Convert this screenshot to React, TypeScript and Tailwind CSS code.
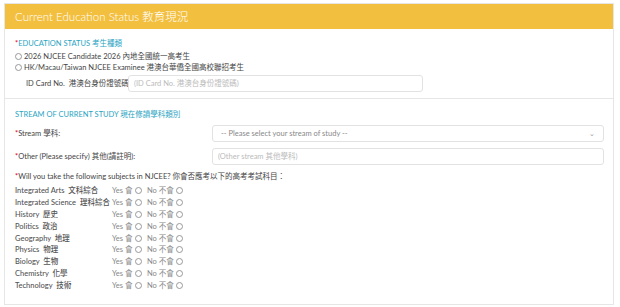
import React from "react";

const subjects = [
  ["Integrated Arts", "文科綜合"],
  ["Integrated Science", "理科綜合"],
  ["History", "歷史"],
  ["Politics", "政治"],
  ["Geography", "地理"],
  ["Physics", "物理"],
  ["Biology", "生物"],
  ["Chemistry", "化學"],
  ["Technology", "技術"],
];

function Radio() {
  return <span className="inline-block h-[7px] w-[7px] shrink-0 rounded-full border border-[#999] bg-white" />;
}

export default function App() {
  return (
    <div
      className="h-[307px] w-[620px] bg-white pl-[4px] pt-[3px]"
      style={{ fontFamily: 'Lato, "Noto Sans CJK TC", sans-serif' }}
    >
      <div className="w-[610px] border border-[#e6e6e6]">
        <div className="flex h-[25px] items-center bg-[#f3bf3f] pl-[10px] text-[11.5px] font-light text-white">
          Current Education Status 教育現況
        </div>

        <section className="h-[70px] border-b border-[#e6e6e6] pl-[10px] pt-[9px] text-[7.5px] leading-[11px] text-[#444]">
          <p className="text-[#2aa4c2]">
            <span className="text-red-600">*</span>EDUCATION STATUS 考生種類
          </p>
          <label className="mt-[2px] flex items-center gap-[2px]">
            <Radio /> 2026 NJCEE Candidate 2026 內地全國統一高考生
          </label>
          <label className="flex items-center gap-[2px]">
            <Radio /> HK/Macau/Taiwan NJCEE Examinee 港澳台華僑全國高校聯招考生
          </label>
          <div className="mt-[2px] flex items-center">
            <span className="w-[113px] whitespace-nowrap pl-[11px]">ID Card No.&nbsp;&nbsp;港澳台身份證號碼</span>
            <div className="flex h-[17px] w-[295px] items-center rounded-[3px] border border-[#e2e2e2] px-[5px] text-[#bbb]">
              (ID Card No. 港澳台身份證號碼)
            </div>
          </div>
        </section>

        <section className="h-[205px] pl-[10px] pt-[10px] text-[7.5px] leading-[11px] text-[#444]">
          <p className="text-[#2aa4c2]">STREAM OF CURRENT STUDY 現在修讀學科類別</p>
          <div className="mt-[5px] flex items-center">
            <span className="w-[197px]">
              <span className="text-red-600">*</span>Stream 學科:
            </span>
            <div className="flex h-[17px] w-[392px] items-center justify-between rounded-[3px] border border-[#e2e2e2] px-[8px] text-[#888]">
              <span>-- Please select your stream of study --</span>
              <span className="text-[7px] text-[#999]">⌄</span>
            </div>
          </div>
          <div className="mt-[6px] flex items-center">
            <span className="w-[197px]">
              <span className="text-red-600">*</span>Other (Please specify) 其他(請註明):
            </span>
            <div className="flex h-[17px] w-[392px] items-center rounded-[3px] border border-[#e2e2e2] px-[5px] text-[#bbb]">
              (Other stream 其他學科)
            </div>
          </div>
          <p className="mt-[6px]">
            <span className="text-red-600">*</span>Will you take the following subjects in NJCEE? 你會否應考以下的高考考試科目：
          </p>
          <div className="mt-[3px]">
            {subjects.map(([en, zh]) => (
              <div key={en} className="flex h-[11.8px] items-center">
                <span className="w-[97px] whitespace-nowrap font-medium text-[#555]">
                  {en}&nbsp;&nbsp;{zh}
                </span>
                <span className="flex w-[35px] items-center gap-[2px] text-[#888]">
                  Yes 會 <Radio />
                </span>
                <span className="flex items-center gap-[2px] text-[#888]">
                  No 不會 <Radio />
                </span>
              </div>
            ))}
          </div>
        </section>
      </div>
    </div>
  );
}
